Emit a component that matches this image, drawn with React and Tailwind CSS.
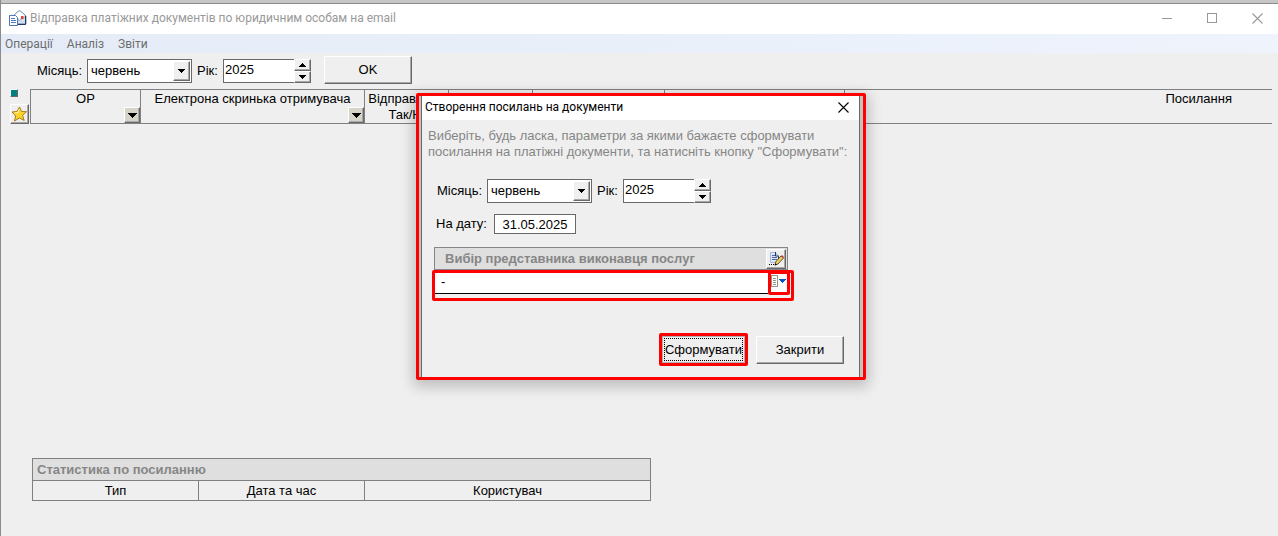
import React from "react";
import clsx from "clsx";

const MONTHS = [
  "січень", "лютий", "березень", "квітень", "травень", "червень",
  "липень", "серпень", "вересень", "жовтень", "листопад", "грудень",
];

// Classic raised 3D edge shared by all small buttons
const edge =
  "border border-t-white border-l-white border-r-[#696969] border-b-[#696969] shadow-[inset_-1px_-1px_0_#a8a8a8]";
const raised = `${edge} bg-[#efefef]`;

function Triangle({ up }) {
  return (
    <svg width="7" height="4" viewBox="0 0 7 4" shapeRendering="crispEdges" aria-hidden="true">
      <path d={up ? "M3 0h1v1h1v1h1v1h1v1H0V3h1V2h1V1h1z" : "M0 0h7v1H6v1H5v1H4v1H3V3H2V2H1V1H0z"} fill="#000" />
    </svg>
  );
}

function FilterTriangle() {
  return (
    <svg width="9" height="5" viewBox="0 0 9 5" shapeRendering="crispEdges" aria-hidden="true">
      <path d="M0 0h9v1H8v1H7v1H6v1H5v1H4V4H3V3H2V2H1V1H0z" fill="#000" />
    </svg>
  );
}

function CloseGlyph() {
  return (
    <svg width="11" height="11" viewBox="0 0 11 11" aria-hidden="true">
      <path d="M.5.5l10 10M10.5.5l-10 10" fill="none" stroke="currentColor" strokeWidth="1.1" />
    </svg>
  );
}

function MailIcon() {
  return (
    <svg width="18" height="17" viewBox="0 0 18 17" aria-hidden="true">
      <path d="M4 6l5.500-5h2L17 6v8H4z" fill="#dfe9f5" stroke="#7089a8" />
      <path d="M6 5l4.500-3.500L15 5v3H6z" fill="#fff" />
      <path d="M4.500 6.500l6 4 6-4v7h-12z" fill="#d3deee" stroke="#8fa3c0" strokeWidth=".8" />
      <rect x="12" y="6" width="2.500" height="3" fill="#e0452a" />
      <path d="M16.500 6v8.500H9" fill="none" stroke="#22386b" />
      <path d="M.5 5.500h6l2 2v8h-8z" fill="#fff" stroke="#4d78b5" />
      <path d="M2 8.500h4M2 10.500h5M2 12.500h5" stroke="#4d78b5" />
    </svg>
  );
}

function StarIcon() {
  return (
    <svg width="16" height="16" viewBox="0 0 16 16" className="shrink-0" aria-hidden="true">
      <path d="M8.500 1l2 4.500 5 .2-4 3.500 1.700 5.300-4.700-2.600L3.500 15l1.200-5L1 6l5-.5z" fill="#ffd42a" stroke="#a97b12" strokeLinejoin="round" />
      <path d="M8.300 3L7 6.500l-3.500.4" fill="none" stroke="#fff6b8" />
    </svg>
  );
}

function EditIcon() {
  return (
    <svg width="16" height="16" viewBox="0 0 16 16" className="shrink-0" aria-hidden="true">
      <path d="M2.500 1.500h5l3 3v7h-8z" fill="#dce7f8" stroke="#a9b8dc" />
      <path d="M7.500 1v4h3v5" fill="none" stroke="#26365f" />
      <path d="M4 4.500h3M4 6.500h5M4 8.500h5" stroke="#4c69ad" />
      <path d="M1 13.500h1M3 13.500h1M5 13.500h1" stroke="#000" />
      <path d="M7 14l1-3.500L13 5l2.500 2L10 13z" fill="#f0cf62" stroke="#54421b" strokeWidth=".9" />
      <path d="M13 5l1-1 2 2-1 1z" fill="#c93b30" />
      <path d="M6.500 14.500l1-2 1.500 1z" fill="#000" />
    </svg>
  );
}

function ListMenuIcon() {
  return (
    <svg width="16" height="12" viewBox="0 0 16 12" shapeRendering="crispEdges" className="shrink-0" aria-hidden="true">
      <path d="M.5.5h6v11h-6z" fill="#fff" stroke="#93988c" />
      <path d="M2 3.500h3M2 5.500h3M2 7.500h3M2 9.500h3" stroke="#93988c" />
      <path d="M8 4h7v1h-1v1h-1v1h-1v1h-1V7h-1V6H9V5H8z" fill="#0a55c4" />
    </svg>
  );
}

function MonthYear({ prefix }) {
  return (
    <div className="flex items-center">
      <label htmlFor={`${prefix}-month`} className="w-[50px]">Місяць:</label>
      <div className="relative">
        <select
          id={`${prefix}-month`}
          defaultValue="червень"
          className="block h-6 w-[105px] appearance-none border border-[#696969] bg-white pl-[3px] outline-none"
        >
          {MONTHS.map((m) => (
            <option key={m}>{m}</option>
          ))}
        </select>
        <span className={clsx(raised, "pointer-events-none absolute top-0.5 right-0.5 flex h-5 w-[17px] items-center justify-center")}>
          <Triangle />
        </span>
      </div>
      <label htmlFor={`${prefix}-year`} className="ml-[5px] w-[26px]">Рік:</label>
      <input
        id={`${prefix}-year`}
        type="text"
        defaultValue="2025"
        className="h-6 w-[71px] border border-r-0 border-[#696969] bg-white pb-[3px] pl-px outline-none"
      />
      <div className="flex h-6 w-[17px] flex-col">
        <button type="button" aria-label="Більше" className={clsx(raised, "flex flex-1 items-center justify-center")}>
          <Triangle up />
        </button>
        <button type="button" aria-label="Менше" className={clsx(raised, "flex flex-1 items-center justify-center")}>
          <Triangle />
        </button>
      </div>
    </div>
  );
}

function HeaderCell({ title, filter, className }) {
  return (
    <th className={clsx("relative h-[35px] border-y border-l border-[#808080] p-0 pt-px align-top font-normal", className)}>
      {title}
      {filter && (
        <button type="button" aria-label="Фільтр" className={clsx(edge, "absolute right-0 bottom-0 flex h-4 w-4 items-center justify-center bg-[#d6d3c8]")}>
          <FilterTriangle />
        </button>
      )}
    </th>
  );
}

function LinksDialog() {
  return (
    <section
      role="dialog"
      aria-labelledby="dialog-title"
      className="absolute top-[93px] left-[415px] w-[450px] rounded-xs border-3 border-[#f00] bg-[#c3c3c3] px-0.5 shadow-[0_4px_14px_3px_rgba(0,0,0,0.2)]"
    >
      <div className="mr-px border-x border-[#696969] bg-[#efefef]">
        <header className="flex h-6 items-center justify-between bg-white pr-2.5 pb-0.5 pl-[3px]">
          <h2 id="dialog-title" className="font-[Roboto,'Open_Sans',sans-serif] text-xs">
            Створення посилань на документи
          </h2>
          <button type="button" aria-label="Закрити вікно">
            <CloseGlyph />
          </button>
        </header>

        <form className="px-3 pb-[11px]" onSubmit={(e) => e.preventDefault()}>
          <p className="-mx-1.5 pt-2 leading-4 text-[#868686]">
            Виберіть, будь ласка, параметри за якими бажаєте сформувати
            <br />
            посилання на платіжні документи, та натисніть кнопку "Сформувати":
          </p>

          <div className="mt-[19px] pl-[3px]">
            <MonthYear prefix="dialog" />
          </div>

          <div className="mt-[11px] flex items-center pl-0.5">
            <label htmlFor="on-date" className="w-[58px]">На дату:</label>
            <input
              id="on-date"
              type="text"
              defaultValue="31.05.2025"
              className="h-5 w-[82px] border border-[#696969] bg-white text-center outline-none"
            />
          </div>

          <div className="mt-[13px] flex h-[23px] w-[354px] items-center justify-between border border-[#868686] bg-[#dfdfdf] pr-px pl-2.5">
            <label htmlFor="agent" className="font-bold text-[#868686]">Вибір представника виконавця послуг</label>
            <button type="button" aria-label="Редагувати" className={clsx(raised, "flex h-5 w-5 items-center justify-center")}>
              <EditIcon />
            </button>
          </div>

          <div className="-ml-0.5 flex h-[31px] w-[362px] rounded-xs border-3 border-[#f00] pr-px">
            <input
              id="agent"
              type="text"
              defaultValue="-"
              className="h-[21px] min-w-0 flex-1 border-b border-black bg-white pb-1 pl-1.5 outline-none"
            />
            <button
              type="button"
              aria-label="Вибрати зі списку"
              className="-mt-0.5 flex h-6 w-[22px] items-center justify-center rounded-xs border-3 border-[#f00] bg-white pb-1"
            >
              <ListMenuIcon />
            </button>
          </div>

          <div className="mt-8 flex items-center justify-end gap-2 pr-[3px]">
            <div className="rounded-xs border-3 border-[#f00]">
              <button type="submit" className="block h-[27px] w-[83px] border border-[#b0b0b0] p-px">
                <span className="flex h-full items-center justify-center border border-dotted border-black">Сформувати</span>
              </button>
            </div>
            <button type="button" className={clsx(raised, "h-7 w-[88px]")}>Закрити</button>
          </div>
        </form>
      </div>
    </section>
  );
}

export default function App() {
  return (
    <div className="relative flex min-h-screen flex-col overflow-hidden border-l border-[#8c8c8c] bg-[#efefef] font-['Liberation_Sans',Arial,sans-serif] text-[13px] leading-4 text-black">
      <div className="h-1 border-b border-[#8c8c8c] bg-[#c6c6c6]" />

      <header className="flex h-[30px] items-center bg-white pr-[15px] pb-0.5 pl-2 text-[#999]">
        <MailIcon />
        <h1 className="ml-[3px] flex-1 font-[Roboto,'Open_Sans',sans-serif] text-xs">
          Відправка платіжних документів по юридичним особам на email
        </h1>
        <div className="flex items-center gap-[35px]">
          <button type="button" aria-label="Згорнути" className="h-px w-2.5 bg-[#999]" />
          <button type="button" aria-label="Розгорнути" className="h-2.5 w-2.5 border border-[#999]" />
          <button type="button" aria-label="Закрити">
            <CloseGlyph />
          </button>
        </div>
      </header>

      <nav className="flex h-[19px] items-center gap-3.5 bg-gradient-to-r from-[#e5ecf7] to-[#eef3fc] pl-1 font-[Roboto,'Open_Sans',sans-serif] text-xs text-[#6d6d6d]">
        <button type="button">Операції</button>
        <button type="button">Аналіз</button>
        <button type="button">Звіти</button>
      </nav>

      <div className="flex items-start pt-[3px] pl-9">
        <div className="mt-[3px]">
          <MonthYear prefix="main" />
        </div>
        <button type="button" className={clsx(raised, "ml-[13px] h-7 w-[88px]")}>OK</button>
      </div>

      <main className="mt-[5px] flex flex-1 items-start pr-1.5 pl-[9px]">
        <div className="flex h-[35px] w-5 shrink-0 flex-col items-start justify-between">
          <button type="button" aria-label="Виділити" className="h-2 w-2 border border-t-white border-l-white border-r-[#696969] border-b-[#696969] bg-[#008080]" />
          <button type="button" aria-label="Обране" className={clsx(raised, "flex h-5 w-[19px] items-center justify-center pr-px")}>
            <StarIcon />
          </button>
        </div>
        <table className="w-full table-fixed border-separate border-spacing-0">
          <thead>
            <tr>
              <HeaderCell title="ОР" filter className="w-[110px]" />
              <HeaderCell title="Електрона скринька отримувача" filter className="w-[224px]" />
              <HeaderCell title={<>Відправлено<br />Так/Ні</>} className="w-[84px]" />
              <HeaderCell className="w-[84px]" />
              <HeaderCell className="w-[132px]" />
              <HeaderCell className="w-[180px]" />
              <HeaderCell title="Посилання" className="pr-10 text-right" />
            </tr>
          </thead>
        </table>
      </main>

      <table className="mb-[35px] ml-[31px] w-[619px] table-fixed border-collapse border border-[#808080]">
        <caption className="h-[22px] border border-b-0 border-[#808080] bg-[#dfdfdf] pt-[3px] pl-1 text-left font-bold text-[#868686]">
          Статистика по посиланню
        </caption>
        <thead>
          <tr className="h-5">
            <th className="w-[166px] border border-[#808080] p-0 font-normal">Тип</th>
            <th className="w-[166px] border border-[#808080] p-0 font-normal">Дата та час</th>
            <th className="border border-[#808080] p-0 font-normal">Користувач</th>
          </tr>
        </thead>
      </table>

      <LinksDialog />
    </div>
  );
}
